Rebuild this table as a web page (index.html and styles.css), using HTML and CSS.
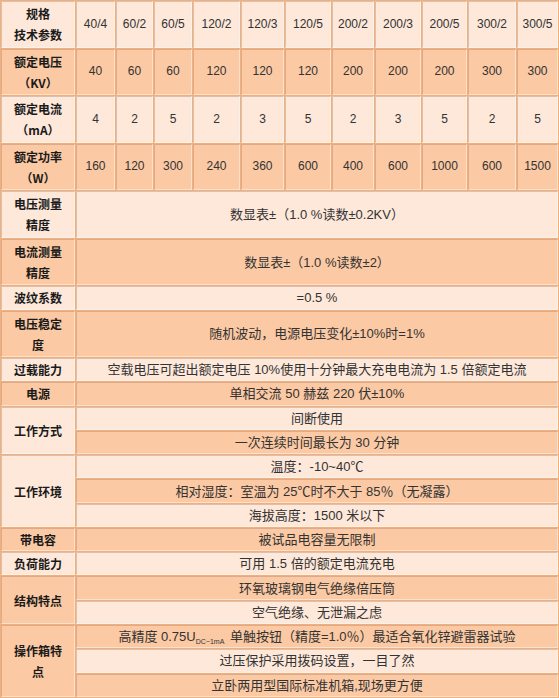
FILE: index.html
```html
<!DOCTYPE html>
<html lang="zh-CN">
<head>
<meta charset="utf-8">
<title>技术参数</title>
<link rel="stylesheet" href="styles.css">
</head>
<body>
<table class="spec">
  <colgroup>
    <col class="c0"><col class="c1"><col class="c2"><col class="c3"><col class="c4"><col class="c5">
    <col class="c6"><col class="c7"><col class="c8"><col class="c9"><col class="c10"><col class="c11">
  </colgroup>
  <tr class="lt two">
    <th>规格<br>技术参数</th>
    <td>40/4</td><td>60/2</td><td>60/5</td><td>120/2</td><td>120/3</td><td>120/5</td><td>200/2</td><td>200/3</td><td>200/5</td><td>300/2</td><td>300/5</td>
  </tr>
  <tr class="dk two">
    <th>额定电压<br>（KV）</th>
    <td>40</td><td>60</td><td>60</td><td>120</td><td>120</td><td>120</td><td>200</td><td>200</td><td>200</td><td>300</td><td>300</td>
  </tr>
  <tr class="lt two">
    <th>额定电流<br>（mA）</th>
    <td>4</td><td>2</td><td>5</td><td>2</td><td>3</td><td>5</td><td>2</td><td>3</td><td>5</td><td>2</td><td>5</td>
  </tr>
  <tr class="dk two">
    <th>额定功率<br>（W）</th>
    <td>160</td><td>120</td><td>300</td><td>240</td><td>360</td><td>600</td><td>400</td><td>600</td><td>1000</td><td>600</td><td>1500</td>
  </tr>
  <tr class="lt two">
    <th>电压测量<br>精度</th>
    <td colspan="11" class="txt">数显表±（1.0 %读数±0.2KV）</td>
  </tr>
  <tr class="dk two">
    <th>电流测量<br>精度</th>
    <td colspan="11" class="txt">数显表±（1.0 %读数±2）</td>
  </tr>
  <tr class="lt">
    <th>波纹系数</th>
    <td colspan="11" class="txt">=0.5 %</td>
  </tr>
  <tr class="dk two">
    <th>电压稳定<br>度</th>
    <td colspan="11" class="txt">随机波动，电源电压变化±10%时=1%</td>
  </tr>
  <tr class="lt">
    <th>过载能力</th>
    <td colspan="11" class="txt">空载电压可超出额定电压 10%使用十分钟最大充电电流为 1.5 倍额定电流</td>
  </tr>
  <tr class="dk">
    <th>电源</th>
    <td colspan="11" class="txt">单相交流 50 赫兹 220 伏±10%</td>
  </tr>
  <tr class="lt">
    <th rowspan="2">工作方式</th>
    <td colspan="11" class="txt">间断使用</td>
  </tr>
  <tr class="dk">
    <td colspan="11" class="txt">一次连续时间最长为 30 分钟</td>
  </tr>
  <tr class="lt">
    <th rowspan="3">工作环境</th>
    <td colspan="11" class="txt">温度：-10~40℃</td>
  </tr>
  <tr class="dk">
    <td colspan="11" class="txt">相对湿度：室温为 25℃时不大于 85％（无凝露）</td>
  </tr>
  <tr class="lt">
    <td colspan="11" class="txt">海拔高度：1500 米以下</td>
  </tr>
  <tr class="dk">
    <th>带电容</th>
    <td colspan="11" class="txt">被试品电容量无限制</td>
  </tr>
  <tr class="lt">
    <th>负荷能力</th>
    <td colspan="11" class="txt">可用 1.5 倍的额定电流充电</td>
  </tr>
  <tr class="dk">
    <th rowspan="2">结构特点</th>
    <td colspan="11" class="txt">环氧玻璃钢电气绝缘倍压筒</td>
  </tr>
  <tr class="lt">
    <td colspan="11" class="txt">空气绝缘、无泄漏之虑</td>
  </tr>
  <tr class="dk">
    <th rowspan="3">操作箱特<br>点</th>
    <td colspan="11" class="txt">高精度 0.75U<sub>DC−1mA</sub> 单触按钮（精度=1.0％）最适合氧化锌避雷器试验</td>
  </tr>
  <tr class="lt">
    <td colspan="11" class="txt">过压保护采用拨码设置，一目了然</td>
  </tr>
  <tr class="dk">
    <td colspan="11" class="txt">立卧两用型国际标准机箱,现场更方便</td>
  </tr>
</table>
</body>
</html>
```

FILE: styles.css
```css
html, body {
  margin: 0;
  padding: 0;
  background: #ffffff;
}

.spec {
  width: 559px;
  height: 698px;
  table-layout: fixed;
  border-collapse: separate;
  border-spacing: 1px;
  background: #f6ae78;
  font-family: "Liberation Sans", "Noto Sans CJK SC", sans-serif;
  font-size: 12px;
  color: #333333;
}

.c0 { width: 74px; }
.c1 { width: 39px; }
.c2 { width: 37px; }
.c3 { width: 38px; }
.c4 { width: 47px; }
.c5 { width: 43px; }
.c6 { width: 46px; }
.c7 { width: 42px; }
.c8 { width: 46px; }
.c9 { width: 45px; }
.c10 { width: 48px; }
.c11 { width: 41px; }

.spec th,
.spec td {
  padding: 0;
  line-height: 21px;
  text-align: center;
  vertical-align: middle;
  white-space: nowrap;
  border: 1px solid;
  border-color: rgba(150, 120, 100, 0.35) rgba(255, 255, 255, 0.45) rgba(255, 255, 255, 0.45) rgba(150, 120, 100, 0.35);
}

.spec th {
  font-family: "Noto Sans CJK SC", sans-serif;
  font-weight: bold;
  font-size: 12px;
  color: #1a1a1a;
}

.two th,
.two td {
  padding: 1px 0;
}

.spec .txt {
  font-size: 13px;
  color: #333333;
}

.lt th,
.lt td {
  background: #fde8da;
}

.dk th,
.dk td {
  background: #fbc9a3;
}

sub {
  font-size: 7px;
  line-height: 0;
  vertical-align: -3px;
  margin-right: 2px;
}
```
